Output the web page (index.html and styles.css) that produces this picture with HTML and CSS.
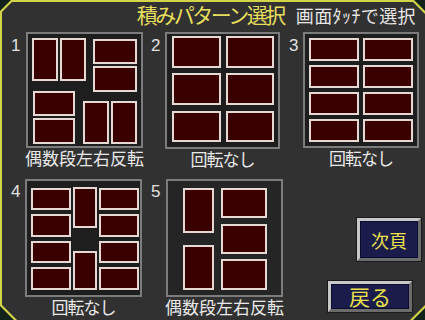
FILE: index.html
```html
<!DOCTYPE html>
<html lang="ja">
<head>
<meta charset="utf-8">
<title>積みパターン選択</title>
<link rel="stylesheet" href="styles.css">
</head>
<body>
<div class="screen">
  <div class="inner">
    <header class="header">
      <h1 class="title">積みパターン選択</h1>
      <p class="hint">画面ﾀｯﾁで選択</p>
    </header>
    <main class="grid">
      <section class="panel">
        <span class="num">1</span>
        <div class="body">
          <svg class="diagram" width="117" height="116" viewBox="0 0 117 116">
            <rect class="box" x="1" y="1" width="115" height="114"/>
            <rect class="cell" x="7" y="7" width="24" height="41"/>
            <rect class="cell" x="35" y="7" width="24" height="41"/>
            <rect class="cell" x="68" y="8" width="42" height="23"/>
            <rect class="cell" x="68" y="35" width="42" height="24"/>
            <rect class="cell" x="8" y="60" width="40" height="23"/>
            <rect class="cell" x="8" y="87" width="40" height="24"/>
            <rect class="cell" x="58" y="70" width="24" height="41"/>
            <rect class="cell" x="86" y="70" width="24" height="41"/>
          </svg>
          <div class="label">偶数段左右反転</div>
        </div>
      </section>
      <section class="panel">
        <span class="num">2</span>
        <div class="body">
          <svg class="diagram" width="115" height="117" viewBox="0 0 115 117">
            <rect class="box" x="1" y="1" width="113" height="115"/>
            <rect class="cell" x="8" y="5" width="47" height="30"/>
            <rect class="cell" x="62" y="5" width="46" height="30"/>
            <rect class="cell" x="8" y="42" width="47" height="30"/>
            <rect class="cell" x="62" y="42" width="46" height="30"/>
            <rect class="cell" x="8" y="80" width="47" height="29"/>
            <rect class="cell" x="62" y="80" width="46" height="29"/>
          </svg>
          <div class="label label--kana">回転なし</div>
        </div>
      </section>
      <section class="panel">
        <span class="num">3</span>
        <div class="body">
          <svg class="diagram" width="116" height="116" viewBox="0 0 116 116">
            <rect class="box" x="1" y="1" width="114" height="114"/>
            <rect class="cell" x="7" y="7" width="48" height="21"/>
            <rect class="cell" x="61" y="7" width="48" height="21"/>
            <rect class="cell" x="7" y="34" width="48" height="21"/>
            <rect class="cell" x="61" y="34" width="48" height="21"/>
            <rect class="cell" x="7" y="61" width="48" height="21"/>
            <rect class="cell" x="61" y="61" width="48" height="21"/>
            <rect class="cell" x="7" y="88" width="48" height="21"/>
            <rect class="cell" x="61" y="88" width="48" height="21"/>
          </svg>
          <div class="label label--kana">回転なし</div>
        </div>
      </section>
      <section class="panel">
        <span class="num num--low">4</span>
        <div class="body">
          <svg class="diagram" width="117" height="118" viewBox="0 0 117 118">
            <rect class="box" x="1" y="1" width="115" height="116"/>
            <rect class="cell" x="7" y="10" width="38" height="20"/>
            <rect class="cell" x="7" y="36" width="38" height="21"/>
            <rect class="cell" x="7" y="63" width="38" height="20"/>
            <rect class="cell" x="7" y="89" width="38" height="21"/>
            <rect class="cell" x="49" y="9" width="22" height="39"/>
            <rect class="cell" x="49" y="73" width="22" height="37"/>
            <rect class="cell" x="75" y="10" width="38" height="20"/>
            <rect class="cell" x="75" y="36" width="38" height="21"/>
            <rect class="cell" x="75" y="63" width="38" height="20"/>
            <rect class="cell" x="75" y="89" width="38" height="21"/>
          </svg>
          <div class="label label--kana">回転なし</div>
        </div>
      </section>
      <section class="panel">
        <span class="num num--low">5</span>
        <div class="body">
          <svg class="diagram" width="117" height="118" viewBox="0 0 117 118">
            <rect class="box box--light" x="1" y="1" width="115" height="116"/>
            <rect class="cell" x="18" y="10" width="29" height="43"/>
            <rect class="cell" x="18" y="67" width="29" height="43"/>
            <rect class="cell" x="56" y="10" width="44" height="28"/>
            <rect class="cell" x="56" y="46" width="44" height="28"/>
            <rect class="cell" x="56" y="81" width="44" height="29"/>
          </svg>
          <div class="label">偶数段左右反転</div>
        </div>
      </section>
      <nav class="buttons">
        <button class="btn btn--next" type="button">次頁</button>
        <button class="btn btn--back" type="button">戻る</button>
      </nav>
    </main>
  </div>
</div>
</body>
</html>
```
FILE: styles.css
```css
* {
  box-sizing: border-box;
  margin: 0;
  padding: 0;
}

html,
body {
  width: 425px;
  height: 320px;
  overflow: hidden;
}

body {
  background: #12241a;
  font-family: "Noto Sans CJK JP", "Noto Sans", sans-serif;
}

.screen {
  width: 425px;
  height: 320px;
  padding: 2px 0 0 2px;
  background: #d4d44a;
  clip-path: polygon(11px 0, 414px 0, 425px 11px, 425px 308px, 413px 320px, 14px 320px, 0 306px, 0 11px);
}

.inner {
  width: 100%;
  height: 100%;
  background: #313131;
  clip-path: polygon(10px 0, 411px 0, 423px 12px, 423px 303px, 408px 318px, 15px 318px, 0 303px, 0 10px);
}

.header {
  display: flex;
  justify-content: flex-end;
  align-items: baseline;
  height: 30px;
  padding-right: 9px;
}

.title {
  margin-right: 12px;
  padding-top: 1px;
  font-size: 21px;
  line-height: 22px;
  letter-spacing: -2.5px;
  font-weight: normal;
  color: #e6de5c;
  white-space: nowrap;
}

.hint {
  font-size: 18px;
  line-height: 18px;
  letter-spacing: 0.4px;
  color: #e8e8e8;
  white-space: nowrap;
}

.grid {
  display: grid;
  grid-template-columns: 140px 138px 1fr;
  grid-template-rows: 147px 1fr;
  padding-left: 8px;
}

.panel {
  display: flex;
  align-items: flex-start;
}

.num {
  width: 15px;
  padding-left: 1px;
  padding-top: 5px;
  font-family: "Liberation Sans", Arial, sans-serif;
  font-size: 17px;
  line-height: 17px;
  color: #e2e2e2;
}

.num--low {
  padding-top: 4px;
}

.body {
  display: flex;
  flex-direction: column;
  align-items: center;
}

.diagram {
  display: block;
}

.box {
  fill: #1e1e1e;
  stroke: #7c7c7c;
  stroke-width: 2;
}

.box--light {
  fill: #252525;
}

.cell {
  fill: #3a0000;
  stroke: #e6d8d2;
  stroke-width: 2;
}

.label {
  font-size: 17px;
  line-height: 20px;
  color: #e8e8e8;
  white-space: nowrap;
}

.label--kana {
  letter-spacing: -1px;
}

.buttons {
  display: flex;
  flex-direction: column;
  align-items: flex-end;
  padding-top: 39px;
}

.btn {
  display: flex;
  align-items: center;
  justify-content: center;
  background: #1b1b4c;
  border: 3px solid;
  border-color: #c8c8c8 #6c6c6c #6c6c6c #c8c8c8;
  box-shadow: 0 0 0 1px #1a1a1a, inset 0 0 0 1px #0c0c2c;
  color: #e8e04a;
  font-family: "Noto Sans CJK JP", sans-serif;
  cursor: pointer;
}

.btn--next {
  width: 64px;
  height: 43px;
  margin-right: 4px;
  font-size: 18px;
  line-height: 18px;
}

.btn--back {
  width: 84px;
  height: 31px;
  margin-top: 20px;
  margin-right: 13px;
  font-size: 21px;
  line-height: 21px;
}
```
